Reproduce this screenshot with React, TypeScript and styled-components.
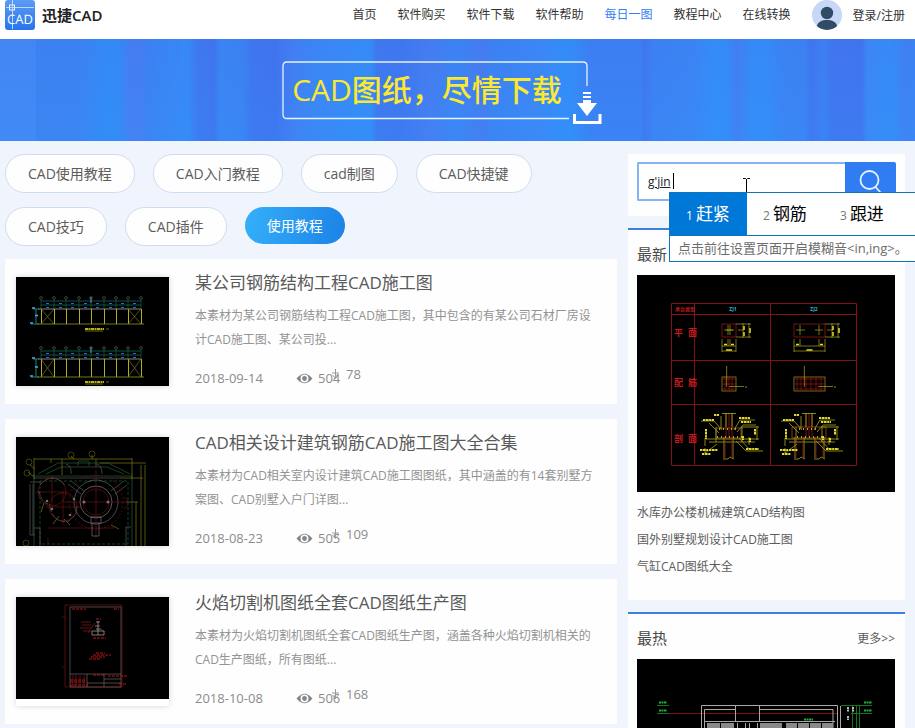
import React from 'react';
import styled, { createGlobalStyle } from 'styled-components';

const GlobalStyle = createGlobalStyle`
  *, *::before, *::after { box-sizing: border-box; }
  body {
    margin: 0;
    background: #f0f5fd;
    color: #5c5c5c;
    font-family: "Open Sans", "Noto Sans CJK SC", sans-serif;
    font-size: 12px;
  }
  button, input { font: inherit; }
  a { color: inherit; text-decoration: none; }
  h1, h2, p, ul { margin: 0; padding: 0; font-weight: 400; }
  ul { list-style: none; }
  svg { display: block; flex-shrink: 0; }
`;

const Page = styled.div`
  height: 100vh;
  overflow-x: hidden;
  overflow-y: auto;
  scrollbar-width: none;
`;

const Header = styled.header`
  display: flex;
  align-items: center;
  justify-content: space-between;
  padding: 0 10px 9px 5px;
  background: #fff;
`;

const Brand = styled.a`
  display: flex;
  align-items: center;
  gap: 7px;
  color: #222;
  font-size: 15px;
  font-weight: 600;
  line-height: 30px;
`;

const Nav = styled.nav`
  display: flex;
  align-items: center;
  gap: 21px;
  white-space: nowrap;
`;

const NavLink = styled.a<{ $active?: boolean }>`
  color: ${(p) => (p.$active ? '#2f80f5' : '#333')};
  line-height: 30px;
`;

const Account = styled.a`
  display: flex;
  align-items: center;
  gap: 11px;
  color: #333;
`;

const Banner = styled.section`
  display: flex;
  align-items: center;
  justify-content: center;
  height: 102px;
  padding-right: 47px;
  background:
    linear-gradient(180deg, rgba(64, 116, 238, 0.15), rgba(52, 146, 250, 0.2)),
    linear-gradient(90deg,
      #4489f5 0%, #4489f5 3.8%, #3d83f2 4%, #3d83f2 8.5%, #318cf6 11.5%, #338bf6 13%,
      #467ff1 14.2%, #467ff1 15.6%, #3b83f3 16.2%, #368bf7 20.5%, #3f78ef 21.6%, #3f74ee 23.4%,
      #3a85f4 24%, #3b83f3 26.5%, #3f75ef 27.6%, #3f73ee 30.2%, #437ff2 32%, #3c86f5 34%,
      #338ff8 40.5%, #3f77ef 41.2%, #3f76ef 44%, #477df1 47%, #3b85f4 50%, #477cf0 52.6%,
      #3b83f3 54%, #3c88f6 59%, #318ff9 61.5%, #338ef8 62.5%, #3c80f3 64.5%, #3c80f3 70%,
      #4175ef 70.4%, #3c82f3 71.4%, #3b86f5 76%, #328ff9 78%, #348df8 79.5%, #437ff1 80.5%,
      #348df8 82.2%, #338df8 83.8%, #3b84f3 85.5%, #3b83f3 88%, #4174ef 88.6%, #3d80f3 90%,
      #4074ee 91%, #4074ee 94.2%, #3c89f5 94.8%, #348df8 97.5%, #4081f2 99%, #3c85f4 100%);
`;

const BannerSign = styled.div`
  position: relative;
  padding: 0 24px 0 10px;
`;

const BannerFrame = styled.svg`
  position: absolute;
  left: 0;
  top: 0;
`;

const BannerTitle = styled.h1`
  color: #fbe830;
  font-size: 30px;
  font-weight: 500;
  line-height: 60px;
  white-space: nowrap;
`;

const Content = styled.main`
  display: grid;
  grid-template-columns: minmax(0, 1fr) 277px;
  gap: 11px;
  align-items: start;
  padding: 13px 10px 4px 5px;
`;

const Tags = styled.nav`
  display: flex;
  flex-wrap: wrap;
  align-items: flex-start;
  gap: 14px 18px;
  margin-bottom: 13px;
`;

const Tag = styled.a<{ $active?: boolean }>`
  padding: 0 22px;
  border: ${(p) => (p.$active ? '0' : '1px solid #cfdcf0')};
  border-radius: 20px;
  background: ${(p) => (p.$active ? 'linear-gradient(100deg, #35b0fb, #1b82e6)' : '#fefefe')};
  color: ${(p) => (p.$active ? '#fff' : '#5c5c5c')};
  font-size: 14px;
  line-height: 37px;
`;

const Cards = styled.div`
  display: flex;
  flex-direction: column;
  gap: 15px;
`;

const Card = styled.article`
  display: grid;
  grid-template-columns: 153px minmax(0, 1fr);
  gap: 26px;
  height: 145px;
  padding: 18px 20px 0 11px;
  background: #fefefe;
`;

const Thumb = styled.a`
  height: 109px;
  background: #fff;
  box-shadow: 0 0 6px rgba(0, 0, 0, 0.16);
`;

const CardTitle = styled.h2`
  margin-top: -6px;
  color: #595959;
  font-size: 17px;
  line-height: 24px;
`;

const Summary = styled.p`
  margin-top: 9px;
  color: #939393;
  line-height: 24px;
`;

const Meta = styled.div`
  display: grid;
  grid-template-columns: 101px 35px auto;
  align-items: start;
  margin-top: 16px;
  color: #8c8c8c;
  font-size: 13px;
  line-height: 20px;
`;

const Count = styled.span<{ $raised?: boolean }>`
  display: flex;
  align-items: center;
  gap: 5px;
  margin-top: ${(p) => (p.$raised ? '-4px' : '0')};
`;

const Sidebar = styled.aside`
  display: flex;
  flex-direction: column;
  gap: 12px;
`;

const SearchPanel = styled.section`
  position: relative;
  padding: 8px 9px 15px;
  background: #fefefe;
`;

const SearchForm = styled.form`
  display: flex;
  height: 39px;
`;

const SearchInput = styled.input`
  flex: 1;
  min-width: 0;
  padding: 0 9px;
  border: 2px solid #84b4f4;
  border-right: 0;
  border-radius: 2px 0 0 2px;
  outline: 0;
  background: #fff;
  color: #222;
  font-size: 12px;
  text-decoration: underline;
`;

const SearchButton = styled.button`
  display: flex;
  justify-content: center;
  width: 51px;
  padding: 8px 0 0;
  border: 0;
  border-radius: 0 2px 2px 0;
  background: #2f7cf3;
`;

const Caret = styled.span`
  position: absolute;
  left: 45px;
  top: 19px;
  width: 1px;
  height: 16px;
  background: #000;
`;

const Pointer = styled.svg`
  position: absolute;
  left: 115px;
  top: 24px;
`;

const Ime = styled.div`
  position: absolute;
  z-index: 2;
  left: 41px;
  top: 38px;
  width: 262px;
  border: 1px solid #1173b9;
  background: #fff;
`;

const Candidates = styled.div`
  display: flex;
  border-bottom: 1px solid #1173b9;
`;

const Candidate = styled.button<{ $active?: boolean }>`
  display: flex;
  align-items: center;
  gap: 3px;
  width: 77px;
  height: 42px;
  padding: 0 0 0 16px;
  border: 0;
  background: ${(p) => (p.$active ? '#0078d7' : 'transparent')};
  color: ${(p) => (p.$active ? '#fff' : '#000')};
  font-size: 17px;
  line-height: 24px;
  white-space: nowrap;

  small {
    padding-top: 3px;
    color: ${(p) => (p.$active ? '#fff' : '#777')};
    font-size: 12px;
    line-height: 21px;
  }
`;

const ImeTip = styled.p`
  padding-left: 8px;
  color: #6c6c6c;
  font-size: 13px;
  line-height: 25px;
  white-space: nowrap;
`;

const Panel = styled.section`
  padding: 0 10px 0 9px;
  border-top: 2px solid #3b80dc;
  background: #fefefe;
`;

const PanelHead = styled.div`
  display: flex;
  align-items: center;
  justify-content: space-between;
  height: 45px;
  padding-top: 2px;
`;

const PanelTitle = styled.h2`
  color: #484848;
  font-size: 15px;
`;

const Links = styled.ul`
  padding: 7px 0 20px;
  line-height: 27px;
`;

function Logo() {
  return (
    <svg width="30" height="30" viewBox="0 0 30 30" aria-hidden="true">
      <defs>
        <linearGradient id="logo" x1="0" y1="0" x2="0" y2="1">
          <stop offset="0" stopColor="#5b9cf2" />
          <stop offset="1" stopColor="#2874ec" />
        </linearGradient>
      </defs>
      <rect width="30" height="30" rx="3" fill="url(#logo)" />
      <g stroke="#b9d8fb" fill="none">
        <path d="M1 7.5H29M7.500 0V29" />
        <rect x="4.500" y="5" width="5" height="5" stroke="#e8f3ff" />
      </g>
      <text x="15" y="24" textAnchor="middle" fill="#fff" fontSize="13" fontWeight="400" textRendering="geometricPrecision">CAD</text>
    </svg>
  );
}

function Avatar() {
  return (
    <svg width="30" height="30" viewBox="0 0 30 30" aria-hidden="true">
      <clipPath id="avatar"><circle cx="15" cy="15" r="15" /></clipPath>
      <g clipPath="url(#avatar)">
        <rect width="30" height="30" fill="#c6d7f8" />
        <circle cx="15" cy="13" r="6.200" fill="#304b64" />
        <path d="M4.500 27C6 21.500 10 20 15 20S24 21.500 25.500 27L21 30H9Z" fill="#304b64" />
      </g>
    </svg>
  );
}

function DownloadSign() {
  return (
    <BannerFrame width="320" height="66" viewBox="0 0 320 66" aria-hidden="true">
      <path d="M287 58.500H5Q1 58.500 1 54.500V6Q1 2 5 2H301Q305 2 305 6V26" fill="none" stroke="#e5f2ff" strokeWidth="1.300" />
      <path d="M301 32h8v2h-8zM301 36h8v2h-8zM301 40h8v3h6l-10 13-10-13h6z" fill="#fff" />
      <path d="M292.500 54V62.500H318V54" fill="none" stroke="#fff" strokeWidth="3" />
    </BannerFrame>
  );
}

function Eye() {
  return (
    <svg width="17" height="11" viewBox="0 0 17 11" aria-hidden="true">
      <path fillRule="evenodd" fill="#858585" d="M.5 5.500Q8.500-4 16.500 5.500Q8.500 15 .5 5.500ZM8.500 1.500A4 4 0 1 0 8.500 9.500A4 4 0 1 0 8.500 1.500Z" />
      <circle cx="8.500" cy="5.500" r="2.400" fill="#858585" />
    </svg>
  );
}

function Down() {
  return (
    <svg width="10" height="11" viewBox="0 0 10 11" aria-hidden="true">
      <path d="M4.500 0V9M1.500 6L4.500 9.500L7.500 6M1 4H8" fill="none" stroke="#999" />
    </svg>
  );
}

function FrameRow({ y, tall }: { y: number; tall: number }) {
  const posts = [0, 13, 25, 38, 50, 63, 75, 87, 100];
  return (
    <g transform={`translate(25 ${y})`} fill="none">
      <path d="M0 4H100M0 8H100" stroke="#16766d" strokeWidth=".7" />
      <path d="M50 0V6" stroke="#66aee8" />
      {posts.map((x) => (
        <g key={x}>
          <circle cx={x} cy="1" r="1.400" stroke="#55745c" strokeWidth=".6" />
          <path d={`M${x} 3V12`} stroke="#196b52" strokeWidth=".6" />
          <path d={`M${x + 0.5} 12V${12 + tall}`} stroke="#b3ae1a" />
          {x < 100 && <path d={`M${x + 5} 6.500h3M${x + 5} 10.500h3`} stroke="#276bc4" />}
        </g>
      ))}
      <path d="M-3 12H100" stroke="#bbb" strokeWidth=".7" />
      <path d={`M-4 ${12 + tall}H103`} stroke="#8d9b24" strokeWidth=".8" />
      <path d={`M0 12L13 ${12 + tall}M13 12L0 ${12 + tall}M87 12L100 ${12 + tall}M100 12L87 ${12 + tall}`} stroke="#8c871b" strokeWidth=".6" />
      <path d={`M-5 12V${12 + tall}M-8 12H-2M-10 ${12 + tall}H-2`} stroke="#16887d" />
      <path d={`M-9 11h3M-6 ${11 + tall / 2}h3M-11 ${11 + tall}h3`} stroke="#53a9ed" strokeWidth="1.500" />
      <path d={`M44 ${17 + tall}H63`} stroke="#b9b318" strokeWidth="2" strokeDasharray="3 .5 2 .5" />
      <path d={`M44 ${19 + tall}H62M65 ${17 + tall}h3`} stroke="#b9b318" strokeWidth=".6" />
    </g>
  );
}

function FrameDrawing() {
  return (
    <svg width="100%" height="109" viewBox="0 0 153 109" role="img" aria-label="钢筋结构">
      <rect width="153" height="109" fill="#000" />
      <FrameRow y={20} tall={15} />
      <FrameRow y={70} tall={18} />
    </svg>
  );
}

function MachineDrawing() {
  return (
    <svg width="100%" height="109" viewBox="0 0 153 109" role="img" aria-label="机械图">
      <rect width="153" height="109" fill="#000" />
      <g fill="none" strokeWidth=".7" opacity=".75">
        <g stroke="#a4a31c">
          <path d="M18 22H116M18 21V42M116 21V42M46 22V38M35 22V26M80 22V30M84 26H130M125 28V109M129 28V109M120 65V109M104 41H127" />
          <path d="M110 65H122M14 28l5 4M12 35l6 5M55 19l3 3M76 18v4M25 75l3-9M37 87l6-8M54 88l-6-6M95 88l8 4" />
          <g strokeWidth=".5">
            <circle cx="55" cy="18" r="3" /><circle cx="76" cy="17" r="3" />
            <circle cx="13" cy="25" r="3" /><circle cx="11" cy="36" r="3" /><circle cx="10" cy="106" r="3" />
          </g>
        </g>
        <path d="M22 37L42 26H92L114 37M18 37V109M116 37V109M18 39H116M30 37L45 30H91L108 37M62 24H73M62 25V29M73 25V29" stroke="#377c4e" />
        <path d="M24 44V107H112V44H24" stroke="#207b40" strokeDasharray="3 2" />
        <path d="M18 41H104M14 47V98M17 47V98M14 45H25M14 98H19M52 47L65 57M55 44L68 54M95 54L108 44M99 57L111 48" stroke="#777" />
        <path d="M50 27Q56 29 55 37M81 27Q86 29 86 37M18 91H24V109M115 90H110V109" stroke="#798079" />
        <circle cx="80" cy="65" r="22" stroke="#898989" /><circle cx="80" cy="65" r="16" stroke="#aaa" />
        <g stroke="#8b1919">
          <circle cx="80" cy="65" r="27" strokeDasharray="2 2" /><circle cx="80" cy="65" r="13" />
          <circle cx="36" cy="55" r="14" /><circle cx="47" cy="70" r="14" />
          <path d="M80 33V101M47 65H112M20 55H52M36 39V72M30 70H64M47 54V87M32 101V107M108 60Q117 65 108 72M32 91H98" />
        </g>
        <path d="M24 48Q36 34 49 48M34 70Q38 87 53 84L60 77L61 69M23 54Q25 66 35 68" stroke="#777" strokeDasharray="5 1" />
        <path d="M76 86V99H83V86M75 80H85V86H75Z" stroke="#999" />
        <g fill="#999" stroke="none"><circle cx="68" cy="65" r="1.500" /><circle cx="92" cy="65" r="1.500" /><circle cx="31" cy="64" r="1.300" /><circle cx="36" cy="72" r="1.300" /><circle cx="54" cy="78" r="1.300" /><circle cx="58" cy="62" r="1.300" /></g>
      </g>
    </svg>
  );
}

function SheetDrawing() {
  return (
    <svg width="100%" height="102" viewBox="0 0 153 102" role="img" aria-label="生产图">
      <rect width="153" height="102" fill="#000" />
      <g fill="none">
        <path d="M49 8H106V90H49ZM46 20H49M46 70H49" stroke="#7a1013" strokeWidth=".7" />
        <path d="M54 10H105V90H54ZM54 77H105M71 77V90M88 77V90M88 82H105M88 86H105M71 86H88" stroke="#857472" strokeWidth=".6" />
        <path d="M56 12h14M98 12h5M77 78h13M92 79h20M54 83h16M54 85h16M54 88h18M80 22h5M77 41h13M80 56h9M77 58h18M75 60h14M73 62h12M103 87h8" stroke="#b9161a" strokeDasharray="3 1" />
        <path d="M57 78v11M60 78v11M64 78v11M68 78v11M65 25h10M66 28h9M64 31h11M67 34h8M79 26l-7 10M85 32l4 3" stroke="#91151a" strokeWidth=".7" />
        <path d="M82 24V38M80 25h4M79 29h5M80 32h5M76 34h12v4H76Z" stroke="#b5a3a3" strokeWidth=".7" />
      </g>
    </svg>
  );
}

function PlanDetail({ x, wide }: { x: number; wide: number }) {
  const r = x + wide;
  return (
    <g fill="none" strokeWidth=".7">
      <rect x={x} y="49" width={wide} height="13" stroke="#a51818" />
      <path d={`M${x + 6} 50V60M${x + 2} 55H${x + 11}M${r - 6} 50V60M${r - 10} 55H${r - 2}M${x} 64V77M${r} 64V77M${x + 6} 64V71M${r - 6} 64V71M${x} 71H${r}M${x} 76H${r}M${r} 49H${r + 15}M${r} 62H${r + 15}M${r + 7} 48V63M${r + 13} 48V63M${r + 2} 55H${r + 8}`} stroke="#aaa51e" />
      <path d={`M${x + 2} 69.500h3M${r - 5} 69.500h3M${x + wide / 2 - 3} 75h6M${r + 8} 51v4M${r + 8} 57v4M${r + 14} 53v5`} stroke="#e4df25" strokeWidth="1.500" />
      <rect x={x} y="102" width={wide} height="14" stroke="#a69624" />
      <path d={`M${x + 1} 104H${r}M${x + 1} 109H${r}M${x + 1} 114H${r}M${x + 3} 102v14M${x + 7} 102v14M${r - 4} 102v14`} stroke="#9d1515" />
      {wide > 20 && <path d={`M${x + 12} 102v14M${x + 17} 102v14M${x + 22} 102v14`} stroke="#a51616" />}
      <path d={`M${x + wide / 3} 92v20M${r - 7} 111.500H${r + 8}`} stroke="#aaa51e" />
      <path d={`M${r + 10} 111v2M${x + wide / 3} 91v1`} stroke="#c5c126" />
    </g>
  );
}

function SectionDetail({ x, twin }: { x: number; twin?: boolean }) {
  const piles = twin ? [-14, 6] : [-5];
  return (
    <g transform={`translate(${x} 0)`} fill="none" strokeWidth=".8">
      <path d={twin ? 'M-17 152H17V163H-17Z' : 'M-13 153H12V163H-13Z'} stroke="#a44c1b" />
      <path d="M-3 138V162M0 138V162M3 138V162" stroke="#902018" />
      <path d="M-7 138.500H7M-3 138V152M3 138V152M-13 152V167M13 152V167M-23 164H30M-20 167H26M28 151V165M12 152H30M-24 163V171M20 162V170" stroke="#aaa61e" />
      {piles.map((p) => (
        <g key={p}>
          <path d={`M${p} 162V183M${p + 9} 162V183M${p - 1} 184h5l2-2 4 2`} stroke="#aaa41e" />
          <path d={`M${p + 1} 162V183M${p + 8} 162V183`} stroke="#971616" />
        </g>
      ))}
      <path d="M-12 162H14M-10 154H10" stroke="#e3dc25" strokeDasharray="1 3" strokeWidth="1.500" />
      <path d="M-28 146H-15L-7 155M-20 148L-10 158M5 155L11 145H26M8 157L14 150H27M7 166L17 176H34M10 163L21 175M-8 141V154M-24 173V178L-12 169" stroke="#a7a220" />
      <path d="M-26 145h11M10 143h11M12 147h10M-15 140h5M-23 154v10M14 161v4M21 163v4M17 174h13M-29 175h8M-27 179h9M-20 175h9M26 154v6" stroke="#e1da26" strokeWidth="2" strokeDasharray="2 .6 3 .6" />
    </g>
  );
}

function FoundationDrawing() {
  return (
    <svg width="100%" viewBox="0 0 258 217" role="img" aria-label="基础结构图">
      <rect width="258" height="217" fill="#000" />
      <path d="M34.500 28.500H219.500V190.500H34.500ZM34.500 39.500H219.500M34.500 85.500H219.500M34.500 129.500H219.500M57.500 28.500V190.500M133.500 28.500V190.500" fill="none" stroke="#80101a" />
      <g fill="#c81a1d" fontSize="9" fontWeight="700">
        <text x="37" y="61">平</text><text x="51" y="61">面</text>
        <text x="37" y="111">配</text><text x="51" y="111">筋</text>
        <text x="37" y="167">剖</text><text x="51" y="167">面</text>
      </g>
      <text x="38" y="36" fill="#bc191c" fontSize="5" fontWeight="700">承台类型</text>
      <g fill="#38b4d0" fontSize="5" fontWeight="700" textAnchor="middle">
        <text x="96" y="36">ZJ1</text><text x="177" y="36">ZJ2</text>
      </g>
      <PlanDetail x={85} wide={14} />
      <PlanDetail x={157} wide={31} />
      <SectionDetail x={92} />
      <SectionDetail x={172} twin />
    </svg>
  );
}

function BuildingDrawing() {
  const windows = [70, 84, 123, 134, 149, 161, 173, 185];
  return (
    <svg width="100%" viewBox="0 0 258 217" role="img" aria-label="建筑立面图">
      <rect width="258" height="217" fill="#000" />
      <path d="M22 54.500H201" stroke="#771317" />
      <g fill="none" stroke="#a8a8a8">
        <path d="M64.500 150V46.500H200.500V150M67.500 150V50.500H98M122 50.500H196V150M98.500 47V63M122.500 47V63M203.500 47V150" />
        <path d="M68 62.500H198M100.500 64V78M108.500 64V78M112.500 64V78M120.500 64V78" />
      </g>
      {windows.map((x) => <rect key={x} x={x} y="64" width={x < 90 ? 13 : 11} height="30" fill="#898989" />)}
      <path d="M20 46.500H32M20 54.500H32M204 46.500H235M214 54.500H235M215.500 46V150M219.500 46V150M222.500 46V150" stroke="#147625" />
      <path d="M22 43.500h8M22 51.500h8M227 43.500h8M227 51.500h8M167 60.500h9" stroke="#28aa38" strokeWidth="2" strokeDasharray="2 .5" />
      <path d="M211 48v5M216 48v5M211 57v4" stroke="#bbb" strokeWidth="2" strokeDasharray="2 .5" />
    </svg>
  );
}

const navItems = ['首页', '软件购买', '软件下载', '软件帮助', '每日一图', '教程中心', '在线转换'];
const tags = ['CAD使用教程', 'CAD入门教程', 'cad制图', 'CAD快捷键', 'CAD技巧', 'CAD插件', '使用教程'];
const articles = [
  {
    title: '某公司钢筋结构工程CAD施工图',
    lines: ['本素材为某公司钢筋结构工程CAD施工图，其中包含的有某公司石材厂房设', '计CAD施工图、某公司投...'],
    date: '2018-09-14', views: 504, downloads: 78, Drawing: FrameDrawing,
  },
  {
    title: 'CAD相关设计建筑钢筋CAD施工图大全合集',
    lines: ['本素材为CAD相关室内设计建筑CAD施工图图纸，其中涵盖的有14套别墅方', '案图、CAD别墅入户门详图...'],
    date: '2018-08-23', views: 505, downloads: 109, Drawing: MachineDrawing,
  },
  {
    title: '火焰切割机图纸全套CAD图纸生产图',
    lines: ['本素材为火焰切割机图纸全套CAD图纸生产图，涵盖各种火焰切割机相关的', 'CAD生产图纸，所有图纸...'],
    date: '2018-10-08', views: 506, downloads: 168, Drawing: SheetDrawing,
  },
];
const latest = ['水库办公楼机械建筑CAD结构图', '国外别墅规划设计CAD施工图', '气缸CAD图纸大全'];
const candidates = ['赶紧', '钢筋', '跟进'];

export default function App() {
  return (
    <Page>
      <GlobalStyle />
      <Header>
        <Brand href="#"><Logo />迅捷CAD</Brand>
        <Nav>
          {navItems.map((item) => (
            <NavLink key={item} href="#" $active={item === '每日一图'}>{item}</NavLink>
          ))}
          <Account href="#"><Avatar />登录/注册</Account>
        </Nav>
      </Header>
      <Banner>
        <BannerSign>
          <DownloadSign />
          <BannerTitle>CAD图纸，尽情下载</BannerTitle>
        </BannerSign>
      </Banner>
      <Content>
        <div>
          <Tags>
            {tags.map((tag) => <Tag key={tag} href="#" $active={tag === '使用教程'}>{tag}</Tag>)}
          </Tags>
          <Cards>
            {articles.map(({ title, lines, date, views, downloads, Drawing }) => (
              <Card key={title}>
                <Thumb href="#"><Drawing /></Thumb>
                <div>
                  <CardTitle><a href="#">{title}</a></CardTitle>
                  <Summary>{lines[0]}<br />{lines[1]}</Summary>
                  <Meta>
                    <time>{date}</time>
                    <Count><Eye />{views}</Count>
                    <Count $raised><Down />{downloads}</Count>
                  </Meta>
                </div>
              </Card>
            ))}
          </Cards>
        </div>
        <Sidebar>
          <SearchPanel>
            <SearchForm onSubmit={(e) => e.preventDefault()}>
              <SearchInput aria-label="搜索" defaultValue="g'jin" spellCheck={false} />
              <SearchButton type="submit" aria-label="搜索">
                <svg width="24" height="24" viewBox="0 0 24 24" fill="none" stroke="#e5f2ff" strokeWidth="1.800">
                  <circle cx="10.500" cy="10" r="9" /><path d="M16.500 17L22 23" />
                </svg>
              </SearchButton>
            </SearchForm>
            <Caret />
            <Pointer width="7" height="16" viewBox="0 0 7 16" fill="none" stroke="#000" aria-hidden="true">
              <path d="M0 .5H2.500L3.500 1.500L4.500 .5H7M3.500 1V15M0 15.500H2.500L3.500 14.500L4.500 15.500H7" />
            </Pointer>
            <Ime>
              <Candidates>
                {candidates.map((word, i) => (
                  <Candidate key={word} type="button" $active={i === 0}><small>{i + 1}</small>{word}</Candidate>
                ))}
              </Candidates>
              <ImeTip>点击前往设置页面开启模糊音&lt;in,ing&gt;。</ImeTip>
            </Ime>
          </SearchPanel>
          <Panel>
            <PanelHead><PanelTitle>最新</PanelTitle></PanelHead>
            <FoundationDrawing />
            <Links>
              {latest.map((item) => <li key={item}><a href="#">{item}</a></li>)}
            </Links>
          </Panel>
          <Panel>
            <PanelHead><PanelTitle>最热</PanelTitle><a href="#">更多&gt;&gt;</a></PanelHead>
            <BuildingDrawing />
          </Panel>
        </Sidebar>
      </Content>
    </Page>
  );
}
